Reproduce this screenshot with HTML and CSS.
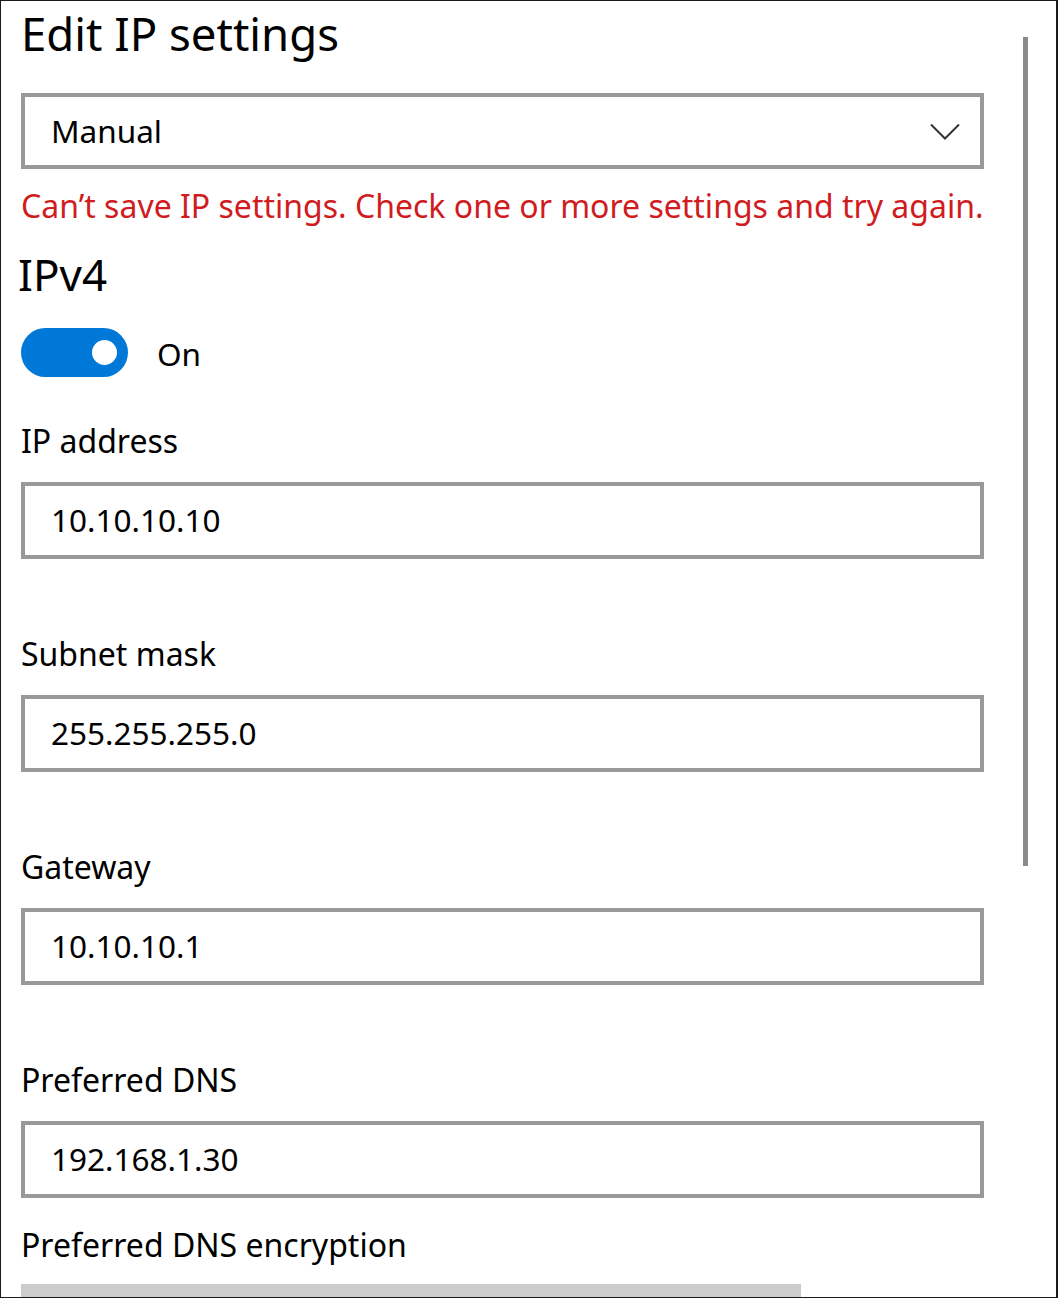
FILE: index.html
```html
<!DOCTYPE html>
<html lang="en">
<head>
<meta charset="utf-8">
<title>Edit IP settings</title>
<link rel="stylesheet" href="styles.css">
</head>
<body>
<div class="frame">
  <div class="scrollbar"></div>
  <div class="content">
    <h1 class="title">Edit IP settings</h1>
    <div class="select">
      <span class="select-value">Manual</span>
      <svg class="chevron" width="30" height="17" viewBox="0 0 30 17"><path d="M1 1.5 L15 15.5 L29 1.5" fill="none" stroke="#333" stroke-width="2"/></svg>
    </div>
    <p class="error">Can’t save IP settings. Check one or more settings and try again.</p>
    <h2 class="section">IPv4</h2>
    <div class="toggle-row">
      <div class="toggle"><span class="knob"></span></div>
      <span class="toggle-label">On</span>
    </div>
    <div class="field field-first">
      <div class="label">IP address</div>
      <div class="textbox">10.10.10.10</div>
    </div>
    <div class="field">
      <div class="label">Subnet mask</div>
      <div class="textbox">255.255.255.0</div>
    </div>
    <div class="field">
      <div class="label">Gateway</div>
      <div class="textbox">10.10.10.1</div>
    </div>
    <div class="field">
      <div class="label">Preferred DNS</div>
      <div class="textbox">192.168.1.30</div>
    </div>
    <div class="label label-enc">Preferred DNS encryption</div>
    <div class="enc-bar"></div>
  </div>
</div>
</body>
</html>
```

FILE: styles.css
```css
html, body {
  margin: 0;
  padding: 0;
  background: #fff;
}
.frame {
  position: relative;
  box-sizing: border-box;
  width: 1058px;
  height: 1298px;
  border-top: 1px solid #1a1a1a;
  border-left: 1px solid #1a1a1a;
  border-right: 2px solid #1a1a1a;
  border-bottom: 1px solid #1a1a1a;
  overflow: hidden;
  font-family: "Noto Sans", "Open Sans", sans-serif;
  color: #000;
}
.scrollbar {
  position: absolute;
  left: 1022px;
  top: 36px;
  width: 5px;
  height: 829px;
  background: #8a8a8a;
}
.content {
  padding-left: 20px;
  width: 963px;
}
.title {
  margin: 4px 0 0 0;
  font-size: 45.5px;
  font-weight: 400;
  line-height: 56px;
}
.select {
  margin-top: 32px;
  box-sizing: border-box;
  height: 76px;
  border: 4px solid #999;
  display: flex;
  align-items: center;
  justify-content: space-between;
  padding: 0 20px 2px 26px;
}
.select-value {
  font-size: 31.5px;
}
.chevron {
  display: block;
  margin-top: 2px;
}
.error {
  margin: 17px 0 0 0;
  font-size: 32px;
  line-height: 40px;
  color: #d01c1f;
  white-space: nowrap;
}
.section {
  margin: 20px 0 0 -3px;
  font-size: 44px;
  font-weight: 400;
  line-height: 56px;
}
.toggle-row {
  margin-top: 26px;
  display: flex;
  align-items: center;
  gap: 29px;
}
.toggle {
  box-sizing: border-box;
  width: 107px;
  height: 49px;
  border-radius: 25px;
  background: #0078d7;
  display: flex;
  align-items: center;
  justify-content: flex-end;
  padding-right: 11px;
}
.knob {
  width: 25px;
  height: 25px;
  border-radius: 50%;
  background: #fff;
}
.toggle-label {
  font-size: 31.5px;
  line-height: 40px;
  padding-top: 2px;
}
.field {
  display: flex;
  flex-direction: column;
}
.label {
  font-size: 32px;
  line-height: 40px;
  margin-top: 75px;
}
.field-first .label {
  margin-top: 44px;
}
.textbox {
  margin-top: 21px;
  box-sizing: border-box;
  height: 77px;
  border: 4px solid #999;
  display: flex;
  align-items: center;
  padding: 0 0 3px 26px;
  font-size: 31.5px;
}
.label-enc {
  margin-top: 27px;
}
.enc-bar {
  margin-top: 19px;
  width: 780px;
  height: 20px;
  background: #cccccc;
}
```
